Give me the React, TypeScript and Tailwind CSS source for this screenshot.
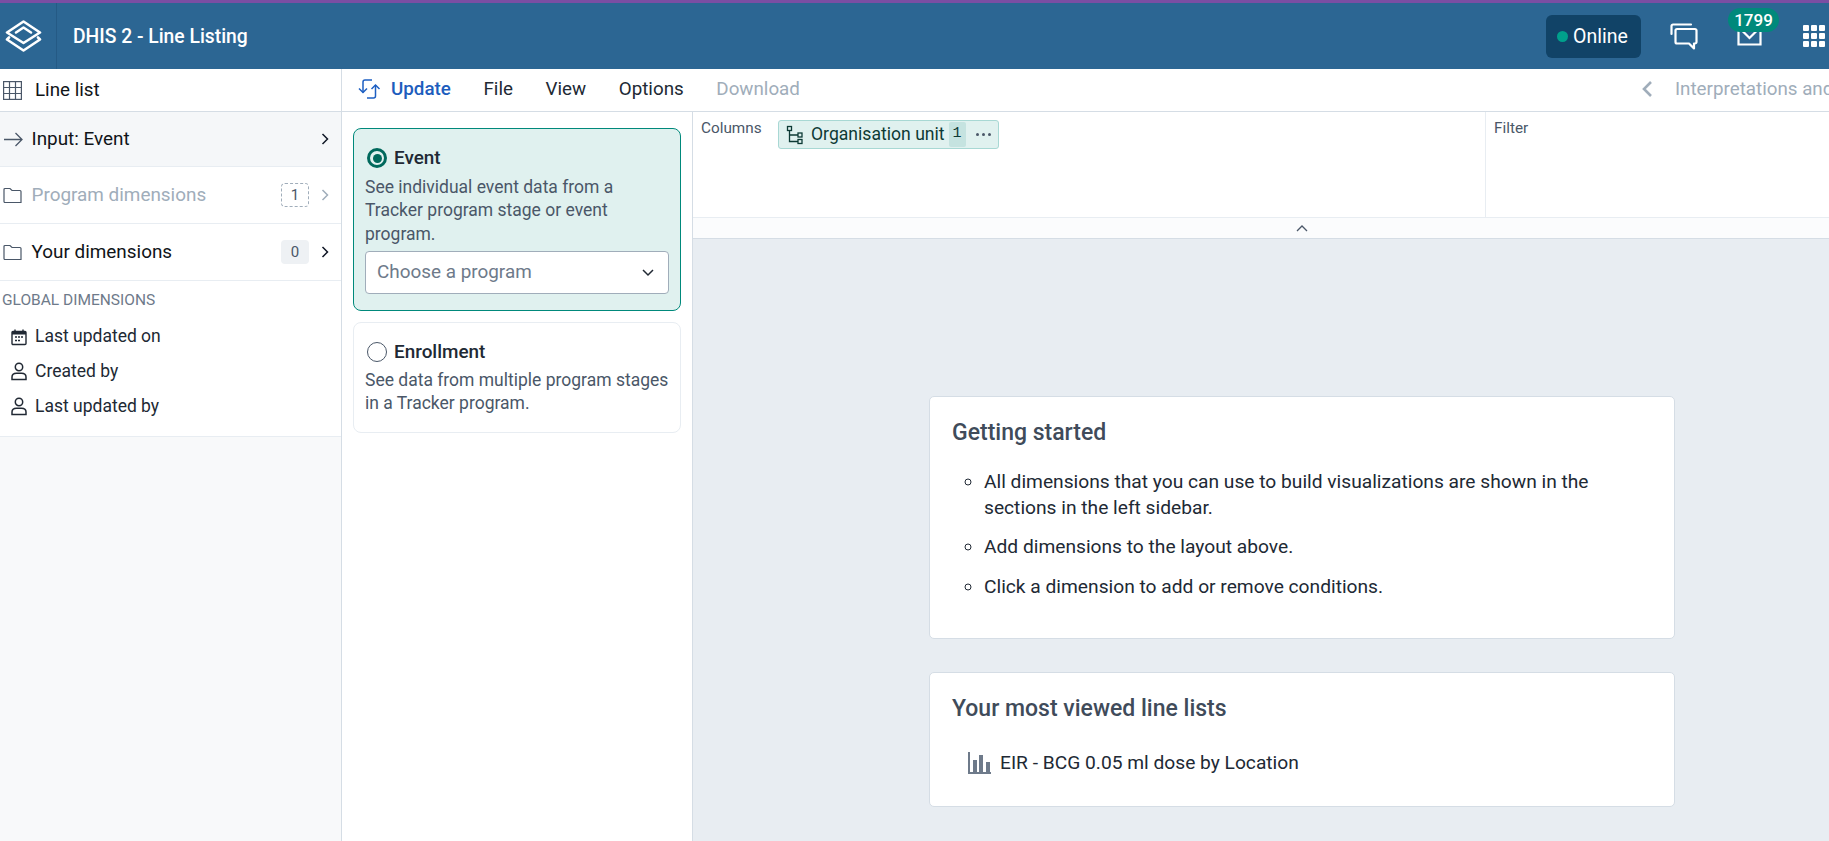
import React from "react";

const Folder = () => (
  <svg width="19" height="17" viewBox="0 0 19 17" fill="none" stroke="#4a5768" strokeWidth="1.2" className="shrink-0">
    <path d="M1 2.5 A1 1 0 0 1 2 1.5 H7 L9 3.5 H17 A1 1 0 0 1 18 4.5 V15.5 H2 A1 1 0 0 1 1 14.5 Z" />
  </svg>
);
const Chevron = ({ color = "#111827" }: { color?: string }) => (
  <svg width="8" height="12" viewBox="0 0 8 12" fill="none" stroke={color} strokeWidth="1.5" className="shrink-0">
    <path d="M1.5 1 L6.5 6 L1.5 11" />
  </svg>
);
const Person = () => (
  <svg width="18" height="19" viewBox="0 0 18 19" fill="none" stroke="#212934" strokeWidth="1.5" className="shrink-0">
    <circle cx="9" cy="5" r="3.7" />
    <path d="M2 17.5 V15 C2 12.5 4 11.2 6.5 11.2 H11.5 C14 11.2 16 12.5 16 15 V17.5 Z" />
  </svg>
);
const Calendar = () => (
  <svg width="18" height="18" viewBox="0 0 18 18" fill="none" className="shrink-0">
    <rect x="2" y="3.5" width="14" height="13" rx="1" stroke="#212934" strokeWidth="1.4" />
    <rect x="2" y="3.5" width="14" height="3" fill="#212934" />
    <path d="M5 1.5 V4 M13 1.5 V4" stroke="#212934" strokeWidth="1.4" />
    <path d="M5 9 h2 M8 9 h2 M11 9 h2 M5 12.5 h2 M8 12.5 h2" stroke="#212934" strokeWidth="1.6" />
  </svg>
);
function Row({ children, h, cls = "" }: { children: React.ReactNode; h: string; cls?: string }) {
  return <div className={`flex items-center border-b border-[#e8edf2] pl-[3px] pr-[12px] text-[18.9px] ${h} ${cls}`}>{children}</div>;
}

export default function App() {
  return (
    <div className="flex h-[841px] w-[1829px] flex-col overflow-hidden bg-white text-[#212934] [font-family:Roboto,sans-serif]">
      <div className="h-[3px] shrink-0 bg-[#7b4ea3]" />
      <header className="flex h-[66px] shrink-0 items-center bg-[#2c6693] text-white">
        <div className="flex h-full w-[57px] shrink-0 items-center border-r border-[#255a85] pl-[5px]">
          <svg width="37" height="32" viewBox="0 0 37 32" fill="none" stroke="white" strokeWidth="2.6" strokeLinejoin="round" strokeLinecap="round">
            <path d="M18.5 1.5 L35 12.5 L18.5 23 L2 12.5 Z" />
            <path d="M11 12.5 L18.5 7.5 L26 12.5" />
            <path d="M4 17.5 L2 19.5 L18.5 30.5 L35 19.5 L33 17.5" />
          </svg>
        </div>
        <div className="ml-4 pt-[2px] text-[19.3px] font-medium">DHIS 2 - Line Listing</div>
        <div className="ml-auto flex h-[43px] w-[95px] items-center rounded-md bg-[#114367] pl-[11px] text-[19.5px]">
          <span className="mr-[5px] h-[11px] w-[11px] rounded-full bg-[#00a08c]" />
          <span className="pt-[2px]">Online</span>
        </div>
        <svg className="ml-[29px]" width="28" height="27" viewBox="0 0 28 27" fill="none" stroke="white" strokeWidth="2.2" strokeLinejoin="round" strokeLinecap="round">
          <path d="M1.5 11 V3 A1.5 1.5 0 0 1 3 1.5 H21" />
          <path d="M7 6 H25 A1.5 1.5 0 0 1 26.5 7.5 V19 A1.5 1.5 0 0 1 25 20.5 H24 V25.5 L19 20.5 H7 A1.5 1.5 0 0 1 5.5 19 V7.5 A1.5 1.5 0 0 1 7 6 Z" />
        </svg>
        <div className="relative ml-[39px] h-[30px] w-[25px]">
          <svg className="absolute bottom-[5px] left-0" width="25" height="24" viewBox="0 0 25 24" fill="none" stroke="white" strokeWidth="2.2">
            <path d="M1.5 1.5 H23.5 V22.5 H1.5 Z" />
            <path d="M1.5 5 L12.5 16 L23.5 5" />
          </svg>
          <div className="absolute left-[-9px] top-[-13px] flex h-[24px] w-[51px] items-center justify-center rounded-full bg-[#00897b] pt-[1px] text-[17px] font-medium">1799</div>
        </div>
        <div className="ml-[41px] mr-[4px] grid w-[22px] shrink-0 grid-cols-3 gap-[2px]">
          {Array.from({ length: 9 }).map((_, i) => <span key={i} className="h-[6px] w-[6px] rounded-[1px] bg-white" />)}
        </div>
      </header>
      <div className="flex h-[43px] shrink-0 border-b border-[#d5dde5]">
        <div className="flex w-[342px] shrink-0 items-center border-r border-[#d5dde5] pl-[3px] text-[18.8px] text-[#101418]">
          <svg width="19" height="19" viewBox="0 0 19 19" fill="none" stroke="#4a5768" strokeWidth="1.2" className="mr-[13px]">
            <rect x="0.6" y="0.6" width="17.8" height="17.8" />
            <path d="M6.5 .5 V18.5 M12.5 .5 V18.5 M.5 6.5 H18.5 M.5 12.5 H18.5" />
          </svg>
          Line list
        </div>
        <div className="flex flex-1 items-center pb-[2px] pl-[16px] text-[18.8px] text-[#212934]">
          <svg width="23" height="20" viewBox="0 0 23 20" fill="none" stroke="#1d5fc2" strokeWidth="1.5" className="mr-[10px]">
            <path d="M5 13.5 V3 A2 2 0 0 1 7 1 H14" />
            <path d="M1 9.5 L5 13.5 L9 9.5" />
            <path d="M17.5 6 V17 A2 2 0 0 1 15.5 19 H9" />
            <path d="M13.5 10 L17.5 6 L21.5 10" />
          </svg>
          <span className="mr-[32.6px] font-medium text-[#1d5dbd]">Update</span>
          <span className="mr-[32.6px]">File</span>
          <span className="mr-[32.6px]">View</span>
          <span className="mr-[32.6px]">Options</span>
          <span className="text-[#a0adba]">Download</span>
          <div className="ml-auto flex items-center">
            <svg width="12" height="18" viewBox="0 0 12 18" fill="none" stroke="#a0adba" strokeWidth="2.6" className="mr-[22px]">
              <path d="M10 2 L3 9 L10 16" />
            </svg>
            <span className="w-[154px] overflow-hidden whitespace-nowrap text-[#a0adba]">Interpretations and details</span>
          </div>
        </div>
      </div>
      <div className="flex min-h-0 flex-1">
        <aside className="w-[342px] shrink-0 border-r border-[#d5dde5] bg-[#f8f9fa]">
          <Row h="h-[55px]" cls="bg-[#f5f7f9] text-[#101418]">
            <svg width="19" height="15" viewBox="0 0 19 15" fill="none" stroke="#4a5768" strokeWidth="1.3" className="mr-[10px] ml-[1px]">
              <path d="M0 7.5 H18 M11.5 1 L18 7.5 L11.5 14" />
            </svg>
            <span className="ml-[-1.5px]">Input: Event</span>
            <span className="ml-auto"><Chevron /></span>
          </Row>
          <Row h="h-[57px]" cls="bg-white text-[#a0adba]">
            <span className="mr-[9.5px]"><Folder /></span>
            Program dimensions
            <span className="ml-auto mr-[12px] flex h-[24px] w-[28px] items-center justify-center rounded border border-dashed border-[#a0adba] text-[15px] text-[#4a5768]">1</span>
            <Chevron color="#a0adba" />
          </Row>
          <Row h="h-[57px]" cls="bg-white text-[#101418]">
            <span className="mr-[9.5px]"><Folder /></span>
            Your dimensions
            <span className="ml-auto mr-[12px] flex h-[24px] w-[28px] items-center justify-center rounded bg-[#eef1f4] text-[15px] text-[#4a5768]">0</span>
            <Chevron />
          </Row>
          <div className="h-[156px] border-b border-[#e8edf2] bg-white pl-[2px]">
            <div className="pt-[10px] text-[15.5px] leading-[18px] text-[#6e7a8a]">GLOBAL DIMENSIONS</div>
            <div className="mt-[10px] flex flex-col pl-[8px] text-[17.5px] text-[#212934]">
              <div className="flex h-[35px] items-center gap-[7px]"><Calendar />Last updated on</div>
              <div className="flex h-[35px] items-center gap-[7px]"><Person />Created by</div>
              <div className="flex h-[35px] items-center gap-[7px]"><Person />Last updated by</div>
            </div>
          </div>
        </aside>
        <section className="w-[351px] shrink-0 border-r border-[#d5dde5] bg-white pl-[11px] pr-[11px] pt-[16px]">
          <div className="h-[183px] rounded-[8px] border border-[#00897b] bg-[#e0f1ef] px-[11px] pt-[19px]">
            <div className="flex items-center gap-[7px] pl-[2px] text-[18.9px] font-medium leading-[20px] text-[#212934]">
              <span className="flex h-[20px] w-[20px] items-center justify-center rounded-full border-[3px] border-[#00695c]"><span className="h-[9px] w-[9px] rounded-full bg-[#00695c]" /></span>
              Event
            </div>
            <p className="mt-[8px] text-[17.5px] leading-[23.4px] text-[#4a5768]">See individual event data from a Tracker program stage or event program.</p>
            <div className="mt-[5px] flex h-[43px] items-center justify-between rounded border border-[#a0adba] bg-white pl-[11px] pr-[14px] text-[18.9px] text-[#6e7a8a]">
              <span className="pb-[2px]">Choose a program</span>
              <svg width="12" height="8" viewBox="0 0 12 8" fill="none" stroke="#212934" strokeWidth="1.5"><path d="M1 1 L6 6 L11 1" /></svg>
            </div>
          </div>
          <div className="mt-[11px] h-[111px] rounded-[8px] border border-[#e8edf2] bg-white px-[11px] pt-[19px]">
            <div className="flex items-center gap-[7px] pl-[2px] text-[18.9px] font-medium leading-[20px] text-[#212934]">
              <span className="h-[20px] w-[20px] rounded-full border border-[#4a5768]" />
              Enrollment
            </div>
            <p className="mt-[7px] text-[17.5px] leading-[23.4px] text-[#4a5768]">See data from multiple program stages in a Tracker program.</p>
          </div>
        </section>
        <main className="flex min-w-0 flex-1 flex-col bg-[#e8edf2]">
          <div className="flex h-[106px] shrink-0 border-b border-[#e8edf2] bg-white">
            <div className="flex w-[793px] shrink-0 border-r border-[#e8edf2] pl-[8px] pt-[7px]">
              <span className="w-[77px] text-[15.3px] leading-[18px] text-[#4a5768]">Columns</span>
              <div className="mt-[1px] flex h-[29px] w-[221px] items-center rounded-[3px] border border-[#a8d8d4] bg-[#e0f1ef] pl-[7px] text-[17.6px] text-[#0d3a35]">
                <svg width="18" height="20" viewBox="0 0 18 20" fill="none" stroke="#0d3a35" strokeWidth="1.3" className="mr-[7px] shrink-0">
                  <rect x="1.5" y="1.5" width="4" height="4" /><rect x="12" y="8" width="4" height="4" /><rect x="12" y="14.5" width="4" height="4" />
                  <path d="M3.5 5.5 V16.5 H12 M3.5 10 H12" />
                </svg>
                <span className="whitespace-nowrap">Organisation unit</span>
                <span className="ml-[4px] flex h-[25px] w-[17px] shrink-0 items-center justify-center rounded-[2px] bg-[#c5e3e0] text-[15px] [font-family:'Liberation_Mono',monospace]">1</span>
                <span className="ml-[10px] flex gap-[3px]"><i className="h-[3px] w-[3px] rounded-full bg-[#4a5768]" /><i className="h-[3px] w-[3px] rounded-full bg-[#4a5768]" /><i className="h-[3px] w-[3px] rounded-full bg-[#4a5768]" /></span>
              </div>
            </div>
            <div className="pl-[8px] pt-[7px] text-[15.3px] leading-[18px] text-[#4a5768]">Filter</div>
          </div>
          <div className="flex h-[21px] shrink-0 items-center border-b border-[#d5dde5] bg-[#fbfcfd] pl-[603px]">
            <svg width="12" height="8" viewBox="0 0 12 8" fill="none" stroke="#4a5768" strokeWidth="1.3"><path d="M1 7 L6 2 L11 7" /></svg>
          </div>
          <div className="ml-[236px] w-[746px] pt-[157px]">
            <div className="h-[243px] rounded-[5px] border border-[#d5dde5] bg-white px-[22px] pt-[24px]">
              <h2 className="text-[23px] font-medium leading-[24px] text-[#404b5a]">Getting started</h2>
              <ul className="mt-[24px] list-[circle] pl-[32px] text-[19.2px] leading-[25.7px] text-[#212934]">
                <li>All dimensions that you can use to build visualizations are shown in the sections in the left sidebar.</li>
                <li className="mt-[14px]">Add dimensions to the layout above.</li>
                <li className="mt-[14px]">Click a dimension to add or remove conditions.</li>
              </ul>
            </div>
            <div className="mt-[33px] h-[135px] rounded-[5px] border border-[#d5dde5] bg-white px-[22px] pt-[24px]">
              <h2 className="text-[23px] font-medium leading-[24px] text-[#404b5a]">Your most viewed line lists</h2>
              <div className="mt-[30px] flex items-center pl-[16px] text-[19.2px] leading-[24px] text-[#212934]">
                <svg width="23" height="22" viewBox="0 0 23 22" className="mr-[9px]" fill="#6e7a8a">
                  <rect x="0" y="0" width="2" height="22" /><rect x="5" y="8" width="4" height="12" /><rect x="11" y="3" width="4" height="17" /><rect x="18" y="10" width="4" height="10" /><rect x="0" y="20" width="23" height="2" />
                </svg>
                EIR - BCG 0.05 ml dose by Location
              </div>
            </div>
          </div>
        </main>
      </div>
    </div>
  );
}
